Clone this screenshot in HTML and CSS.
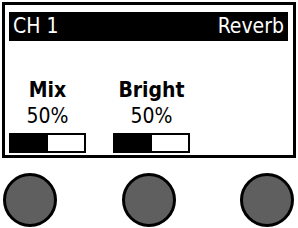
FILE: index.html
```html
<!DOCTYPE html>
<html lang="en">
<head>
    <meta charset="UTF-8">
    <meta name="viewport" content="width=device-width, initial-scale=1.0">
    <title>CH 1 Reverb</title>
    <link rel="stylesheet" href="styles.css">
</head>
<body>
    <div class="screen">
        <div class="header">
            <span>CH 1</span>
            <span>Reverb</span>
        </div>
        <div class="params">
            <div class="param">
                <div class="param-name">Mix</div>
                <div class="param-value">50%</div>
                <div class="bar"><div class="bar-fill" style="width: 50%"></div></div>
            </div>
            <div class="param">
                <div class="param-name">Bright</div>
                <div class="param-value">50%</div>
                <div class="bar"><div class="bar-fill" style="width: 50%"></div></div>
            </div>
        </div>
    </div>
    <div class="knobs">
        <div class="knob"></div>
        <div class="knob"></div>
        <div class="knob"></div>
    </div>
</body>
</html>
```

FILE: styles.css
```css
* {
    box-sizing: border-box;
    margin: 0;
    padding: 0;
}
body {
    font-family: "DejaVu Sans Condensed", "DejaVu Sans", Verdana, sans-serif;
    font-stretch: condensed;
    background-color: #fff;
    color: #000;
    width: 298px;
    height: 228px;
    overflow: hidden;
}
.screen {
    margin: 2px 0 0 2px;
    width: 294px;
    height: 156px;
    border: 3px solid #000;
}
.header {
    display: flex;
    justify-content: space-between;
    margin: 7px 5px 0 4px;
    padding: 0 4px;
    height: 29px;
    background-color: #000;
    color: #fff;
    font-size: 21px;
    line-height: 29px;
}
.params {
    display: flex;
    gap: 27px;
    margin: 36px 0 0 4px;
}
.param {
    width: 77px;
    text-align: center;
    font-size: 21px;
    line-height: 26px;
}
.param-name {
    font-weight: bold;
}
.bar {
    margin-top: 4px;
    height: 20px;
    border: 2px solid #000;
}
.bar-fill {
    height: 100%;
    background-color: #000;
}
.knobs {
    display: flex;
    justify-content: space-between;
    margin-top: 15px;
    padding: 0 4px 0 3px;
}
.knob {
    width: 54px;
    height: 54px;
    border: 3px solid #000;
    border-radius: 50%;
    background-color: #5f5f5f;
}
```
